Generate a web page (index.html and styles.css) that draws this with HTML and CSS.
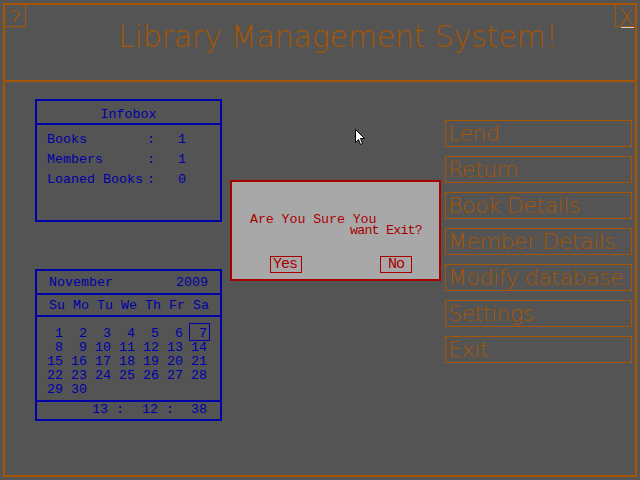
FILE: index.html
```html
<!DOCTYPE html>
<html>
<head>
<meta charset="utf-8">
<title>Library Management System</title>
<link rel="stylesheet" href="styles.css">
</head>
<body>
<div class="screen">
  <header class="head">
    <div class="help">?</div>
    <h1 class="title">Library Management System!</h1>
    <div class="close">X</div>
  </header>
  <main class="main">
    <div class="left">
      <section class="infobox">
        <div class="info-title">Infobox</div>
        <div class="info-body">
          <span>Books</span><span>:</span><span>1</span>
          <span>Members</span><span>:</span><span>1</span>
          <span>Loaned Books</span><span>:</span><span>0</span>
        </div>
      </section>
      <section class="cal">
        <div class="cal-month"><span>November</span><span>2009</span></div>
        <div class="cal-week">
          <span>Su</span><span>Mo</span><span>Tu</span><span>We</span><span>Th</span><span>Fr</span><span>Sa</span>
        </div>
        <div class="cal-days">
          <span>1</span><span>2</span><span>3</span><span>4</span><span>5</span><span>6</span><span><b class="today">7</b></span>
          <span>8</span><span>9</span><span>10</span><span>11</span><span>12</span><span>13</span><span>14</span>
          <span>15</span><span>16</span><span>17</span><span>18</span><span>19</span><span>20</span><span>21</span>
          <span>22</span><span>23</span><span>24</span><span>25</span><span>26</span><span>27</span><span>28</span>
          <span>29</span><span>30</span>
        </div>
        <div class="cal-time">
          <span class="t-num">13</span><span class="t-sep">:</span><span class="t-num">12</span><span class="t-sep2">:</span><span class="t-num">38</span>
        </div>
      </section>
    </div>
    <nav class="menu">
      <div class="btn">Lend</div>
      <div class="btn">Return</div>
      <div class="btn">Book Details</div>
      <div class="btn">Member Details</div>
      <div class="btn">Modify database</div>
      <div class="btn">Settings</div>
      <div class="btn">Exit</div>
    </nav>
  </main>
  <div class="dialog">
    <p class="msg"><span class="l1">Are You Sure You</span><span class="l2">want Exit?</span></p>
    <div class="actions">
      <div class="dbtn">Yes</div>
      <div class="dbtn no">No</div>
    </div>
  </div>
  <svg class="cursor" width="12" height="18" viewBox="0 0 12 18">
    <path d="M0.5 0.5 L0.5 13.5 L3.5 10.5 L5.5 15.5 L7.5 14.5 L5.5 9.5 L9.5 9.5 Z" fill="#ffffff" stroke="#000000" stroke-width="1"/>
  </svg>
</div>
</body>
</html>
```

FILE: styles.css
```css
* { box-sizing: border-box; }
html, body { margin: 0; padding: 0; }
body {
  background: #545454;
  width: 640px;
  height: 480px;
  overflow: hidden;
  font-family: "Liberation Mono", "DejaVu Sans Mono", monospace;
}
.screen {
  position: relative;
  margin: 3px;
  width: 634px;
  height: 474px;
  border: 2px solid #a85400;
  display: flex;
  flex-direction: column;
}
.head {
  display: flex;
  align-items: flex-start;
  height: 77px;
  border-bottom: 2px solid #a85400;
  flex: none;
}
.help, .close, .title, .btn {
  font-family: "DejaVu Sans", "Liberation Sans", sans-serif;
  font-weight: 200;
  color: #a85400;
}
.help {
  width: 21px;
  height: 22px;
  border-right: 1px solid #a85400;
  border-bottom: 1px solid #a85400;
  font-size: 22px;
  line-height: 15px;
  padding-top: 6px;
  text-align: center;
}
.close {
  margin-left: auto;
  width: 20px;
  height: 22px;
  border-left: 1px solid #a85400;
  border-bottom: 1px solid #a85400;
  font-size: 21px;
  line-height: 15px;
  padding: 6px 0 0 2px;
  text-align: center;
  position: relative;
}
.close::after {
  content: "";
  position: absolute;
  left: 5px;
  top: 22px;
  width: 13px;
  height: 1px;
  background: #d0d0d0;
}
.title {
  margin: 17px 0 0 92px;
  font-size: 30px;
  line-height: 30px;
  letter-spacing: -0.2px;
  white-space: nowrap;
}
.main {
  flex: 1;
  display: flex;
  align-items: flex-start;
}
.left {
  padding: 17px 0 0 30px;
  display: flex;
  flex-direction: column;
  gap: 47px;
}
.infobox, .cal {
  width: 187px;
  border: 2px solid #0000a8;
  color: #0000a8;
  font-size: 13.33px;
  line-height: 13px;
}
.infobox { height: 123px; }
.info-title {
  height: 24px;
  padding-top: 7px;
  border-bottom: 2px solid #0000a8;
  text-align: center;
}
.info-body {
  display: grid;
  grid-template-columns: 100px 31px auto;
  row-gap: 7px;
  padding: 8px 0 0 10px;
  white-space: pre;
}
.cal { height: 152px; }
.cal-month {
  height: 24px;
  padding: 5px 12px 0 12px;
  display: flex;
  justify-content: space-between;
  border-bottom: 2px solid #0000a8;
}
.cal-week {
  height: 22px;
  padding: 4px 0 0 2px;
  display: grid;
  grid-template-columns: repeat(7, 24px);
  border-bottom: 2px solid #0000a8;
}
.cal-week span { padding-left: 10px; white-space: nowrap; }
.cal-days {
  height: 85px;
  padding: 10px 0 0 2px;
  display: grid;
  grid-template-columns: repeat(7, 24px);
  grid-auto-rows: 14px;
  line-height: 14px;
  text-align: right;
  border-bottom: 2px solid #0000a8;
}
.today {
  font-weight: normal;
  display: inline-block;
  border: 1px solid #0000a8;
  line-height: 13px;
  padding: 3px 2px 0 9px;
  margin: -4px -3px 0 0;
}
.cal-time {
  display: flex;
  padding: 1px 0 0 55px;
}
.t-num { width: 24px; }
.t-sep { width: 26px; }
.t-sep2 { width: 25px; }
.menu {
  margin: 38px 3px 0 auto;
  width: 187px;
  display: flex;
  flex-direction: column;
  gap: 9px;
}
.btn {
  height: 27px;
  border: 1px solid #a85400;
  font-size: 22px;
  line-height: 25px;
  letter-spacing: -0.45px;
  padding-left: 2px;
  white-space: nowrap;
}
.dialog {
  position: absolute;
  left: 225px;
  top: 175px;
  width: 211px;
  height: 101px;
  background: #a8a8a8;
  border: 2px solid #a80000;
  color: #a80000;
  font-size: 13.33px;
}
.msg {
  margin: 0;
  padding: 32px 0 0 18px;
  line-height: 11px;
  display: flex;
  flex-direction: column;
  white-space: pre;
}
.msg .l1 { letter-spacing: -0.1px; }
.msg .l2 { margin-left: 100px; letter-spacing: -0.8px; }
.actions {
  display: flex;
  gap: 78px;
  margin: 20px 0 0 38px;
}
.dbtn {
  width: 32px;
  height: 17px;
  border: 1px solid #a80000;
  font-size: 15px;
  line-height: 15px;
  letter-spacing: -1px;
  text-align: center;
}
.dbtn:first-child { text-align: left; padding-left: 2px; }
.cursor {
  position: absolute;
  left: 350px;
  top: 124px;
}
```
